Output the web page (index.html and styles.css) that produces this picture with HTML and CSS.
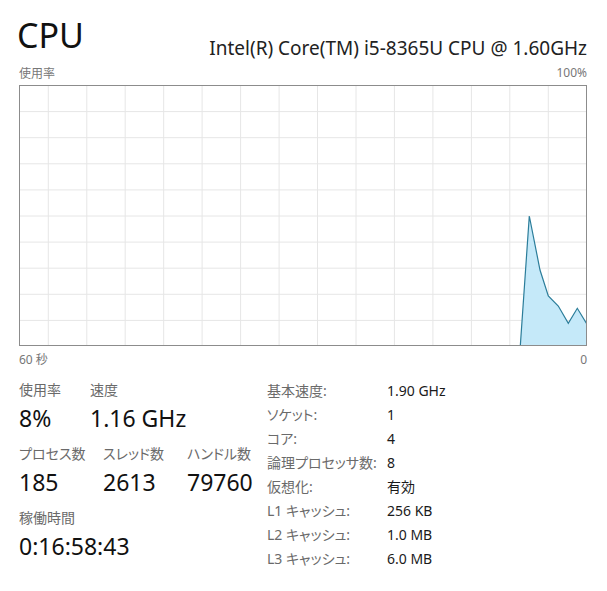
FILE: index.html
```html
<!DOCTYPE html>
<html lang="ja">
<head>
<meta charset="utf-8">
<title>CPU</title>
<link rel="stylesheet" href="styles.css">
</head>
<body>
<div class="page">
  <div class="header">
    <div class="title">CPU</div>
    <div class="model">Intel(R) Core(TM) i5-8365U CPU @ 1.60GHz</div>
  </div>
  <div class="graph-top">
    <span>使用率</span>
    <span>100%</span>
  </div>
  <div class="graph">
    <svg width="568" height="261" viewBox="0 0 568 261">
      <g class="grid">
        <line x1="29.3" y1="0" x2="29.3" y2="261"/>
        <line x1="67.8" y1="0" x2="67.8" y2="261"/>
        <line x1="106.2" y1="0" x2="106.2" y2="261"/>
        <line x1="144.7" y1="0" x2="144.7" y2="261"/>
        <line x1="183.1" y1="0" x2="183.1" y2="261"/>
        <line x1="221.6" y1="0" x2="221.6" y2="261"/>
        <line x1="260.1" y1="0" x2="260.1" y2="261"/>
        <line x1="298.5" y1="0" x2="298.5" y2="261"/>
        <line x1="337" y1="0" x2="337" y2="261"/>
        <line x1="375.4" y1="0" x2="375.4" y2="261"/>
        <line x1="413.9" y1="0" x2="413.9" y2="261"/>
        <line x1="452.4" y1="0" x2="452.4" y2="261"/>
        <line x1="490.8" y1="0" x2="490.8" y2="261"/>
        <line x1="529.3" y1="0" x2="529.3" y2="261"/>
        <line x1="0" y1="26.6" x2="568" y2="26.6"/>
        <line x1="0" y1="52.7" x2="568" y2="52.7"/>
        <line x1="0" y1="78.8" x2="568" y2="78.8"/>
        <line x1="0" y1="104.9" x2="568" y2="104.9"/>
        <line x1="0" y1="131" x2="568" y2="131"/>
        <line x1="0" y1="157.1" x2="568" y2="157.1"/>
        <line x1="0" y1="183.2" x2="568" y2="183.2"/>
        <line x1="0" y1="209.3" x2="568" y2="209.3"/>
        <line x1="0" y1="235.4" x2="568" y2="235.4"/>
      </g>
      <polygon class="area" points="501.3,261 510.3,131 521,185 529.3,211 539.3,221 549.3,238.3 558.3,223.3 568,239.3 568,261"/>
      <polyline class="line" points="501.3,261 510.3,131 521,185 529.3,211 539.3,221 549.3,238.3 558.3,223.3 568,239.3"/>
    </svg>
  </div>
  <div class="graph-bottom">
    <span>60 秒</span>
    <span>0</span>
  </div>
  <div class="stats">
    <div class="dyn">
      <div class="row">
        <div class="stat w70">
          <div class="label">使用率</div>
          <div class="value">8%</div>
        </div>
        <div class="stat">
          <div class="label">速度</div>
          <div class="value">1.16 GHz</div>
        </div>
      </div>
      <div class="row">
        <div class="stat w84">
          <div class="label">プロセス数</div>
          <div class="value">185</div>
        </div>
        <div class="stat w84">
          <div class="label">スレッド数</div>
          <div class="value">2613</div>
        </div>
        <div class="stat">
          <div class="label">ハンドル数</div>
          <div class="value">79760</div>
        </div>
      </div>
      <div class="row">
        <div class="stat">
          <div class="label">稼働時間</div>
          <div class="value">0:16:58:43</div>
        </div>
      </div>
    </div>
    <div class="info">
      <div class="k">基本速度:</div><div class="v">1.90 GHz</div>
      <div class="k">ソケット:</div><div class="v">1</div>
      <div class="k">コア:</div><div class="v">4</div>
      <div class="k">論理プロセッサ数:</div><div class="v">8</div>
      <div class="k">仮想化:</div><div class="v">有効</div>
      <div class="k">L1 キャッシュ:</div><div class="v">256 KB</div>
      <div class="k">L2 キャッシュ:</div><div class="v">1.0 MB</div>
      <div class="k">L3 キャッシュ:</div><div class="v">6.0 MB</div>
    </div>
  </div>
</div>
</body>
</html>
```
FILE: styles.css
```css
html, body {
  margin: 0;
  padding: 0;
  background: #ffffff;
}
body {
  font-family: "Noto Sans", "Noto Sans CJK JP", sans-serif;
  color: #1a1a1a;
  font-feature-settings: "palt";
}
.page {
  width: 568px;
  padding: 16px 20px 0 19px;
}
.header {
  display: flex;
  justify-content: space-between;
  align-items: flex-start;
  height: 44px;
}
.title {
  font-size: 34px;
  line-height: 38px;
  margin-left: -2px;
  color: #111;
}
.model {
  font-size: 19px;
  line-height: 22px;
  padding-top: 21px;
  color: #222;
}
.graph-top, .graph-bottom {
  display: flex;
  justify-content: space-between;
  font-size: 12px;
  color: #777;
}
.graph-top {
  height: 25px;
  align-items: center;
}
.graph-bottom {
  height: 26px;
  align-items: center;
}
.graph {
  width: 568px;
  height: 261px;
  box-sizing: border-box;
  border: 1px solid #8c8c8c;
  overflow: hidden;
}
.graph svg {
  display: block;
  margin: -1px;
}
.grid line {
  stroke: #e6e6e6;
  stroke-width: 1;
}
.area {
  fill: #c5e9f9;
}
.line {
  fill: none;
  stroke: #2b7d9a;
  stroke-width: 1.2;
  stroke-linejoin: miter;
}
.stats {
  display: flex;
  margin-top: 8px;
}
.dyn {
  width: 248px;
  display: flex;
  flex-direction: column;
}
.row {
  display: flex;
  margin-bottom: 10px;
}
.stat.w70 { width: 71px; }
.stat.w84 { width: 84px; }
.label {
  font-size: 14px;
  line-height: 20px;
  color: #6a6a6a;
}
.value {
  font-size: 23px;
  line-height: 32px;
  margin-top: 2px;
  color: #111;
}
.info {
  display: grid;
  grid-template-columns: 120px auto;
  grid-auto-rows: 24px;
  align-items: center;
  font-size: 14px;
  margin-top: -2px;
}
.k {
  color: #6a6a6a;
}
.v {
  color: #1a1a1a;
}
```
